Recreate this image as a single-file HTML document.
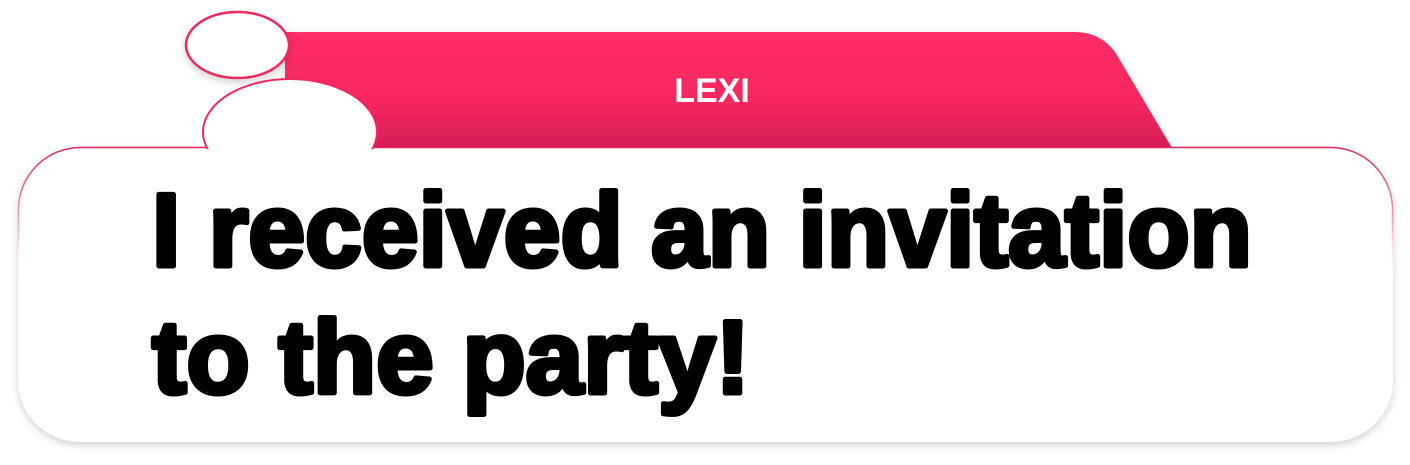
<!DOCTYPE html>
<html><head><style>
html,body{margin:0;padding:0;background:#fff;width:1410px;height:465px;overflow:hidden}
</style></head><body>
<svg width="1410" height="465" viewBox="0 0 1410 465" xmlns="http://www.w3.org/2000/svg">
<defs>
<linearGradient id="tab" x1="0" y1="0" x2="0" y2="1">
<stop offset="0" stop-color="#ff2d68"/><stop offset="0.55" stop-color="#f7285f"/><stop offset="1" stop-color="#d81d58"/>
</linearGradient>
<linearGradient id="edge" x1="0" y1="0" x2="0" y2="1">
<stop offset="0" stop-color="#e8275c"/><stop offset="0.25" stop-color="#f4a0b8"/><stop offset="0.45" stop-color="#ffffff" stop-opacity="0"/>
</linearGradient>
<filter id="sh" x="-5%" y="-10%" width="110%" height="130%">
<feDropShadow dx="0" dy="3" stdDeviation="4" flood-color="#000" flood-opacity="0.18"/>
</filter>
</defs>
<path d="M285 32 H1075 Q1100 32 1115 52 L1172 148 H285 Z" fill="url(#tab)" filter="url(#sh)"/>
<rect x="18" y="147" width="1375" height="295" rx="62" fill="#fff" filter="url(#sh)"/>
<rect x="18.5" y="147.5" width="1374" height="294" rx="62" fill="none" stroke="url(#edge)" stroke-width="1.5"/>
<ellipse cx="237.5" cy="45" rx="51.5" ry="33" fill="#fff" stroke="#ee2a62" stroke-width="2.5" filter="url(#sh)"/>
<ellipse cx="290" cy="132" rx="87" ry="53" fill="#fff" stroke="#ee2a62" stroke-width="2"/>
<rect x="190" y="149" width="200" height="60" fill="#fff"/>
<text x="712" y="102" text-anchor="middle" font-family="Liberation Sans, sans-serif" font-weight="bold" font-size="34" fill="#fff">LEXI</text>
<g font-family="Liberation Sans, sans-serif" font-weight="bold" font-size="104" fill="#000" stroke="#000" stroke-width="5" stroke-linejoin="round">
<text x="152" y="266" textLength="1100" lengthAdjust="spacingAndGlyphs">I received an invitation</text>
<text x="152" y="393" textLength="598" lengthAdjust="spacingAndGlyphs">to the party!</text>
</g>
</svg>
</body></html>
